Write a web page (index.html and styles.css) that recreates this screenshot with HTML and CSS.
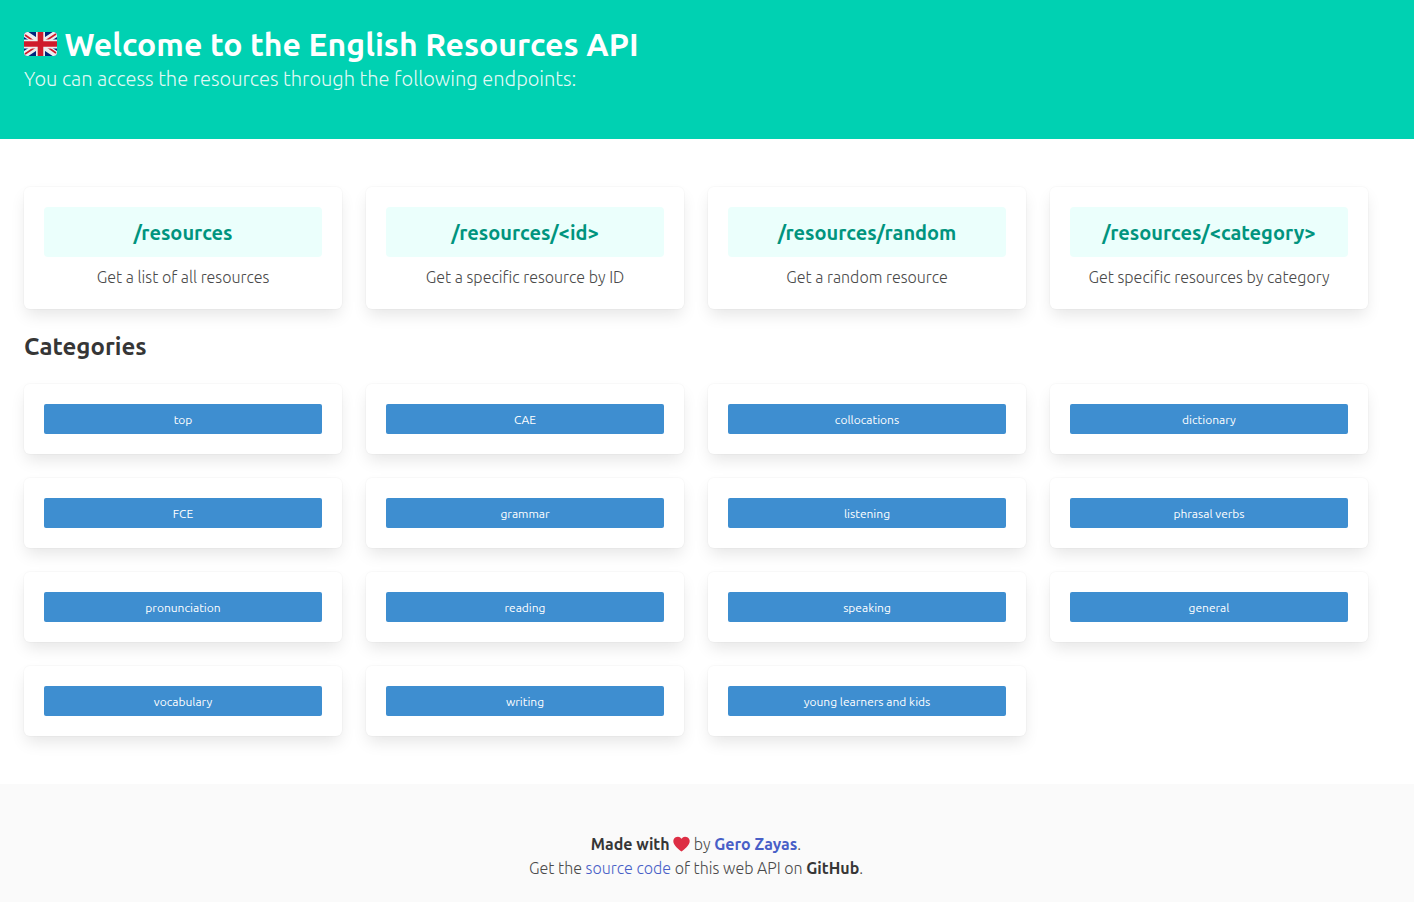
FILE: index.html
```html
<!DOCTYPE html>
<html lang="en">
<head>
<meta charset="utf-8">
<meta name="viewport" content="width=device-width, initial-scale=1">
<title>English Resources API</title>
<link rel="stylesheet" href="styles.css">
</head>
<body>
<header class="hero">
  <h1 class="title"><svg class="flag" viewBox="0 0 33 24" role="img" aria-label="United Kingdom"><defs><clipPath id="flag-shape"><rect width="33" height="24" rx="3.5"/></clipPath></defs><g clip-path="url(#flag-shape)"><rect width="33" height="24" fill="#00247d"/><path d="M0 1 33 23M33 1 0 23" stroke="#eee" stroke-width="6.500"/><path d="M1 3 11 10M32 21 22 14M32 2 20 10M1 22 13 14" stroke="#cf1b2b" stroke-width="1.700"/><path d="M16.500 0V24M0 12H33" stroke="#eee" stroke-width="9"/><path d="M16.500 0V24M0 12H33" stroke="#cf1b2b" stroke-width="5.600"/></g></svg> Welcome to the English Resources API</h1>
  <p class="subtitle">You can access the resources through the following endpoints:</p>
</header>
<main class="section">
  <div class="grid">
    <article class="box"><h2 class="endpoint">/resources</h2><p class="description">Get a list of all resources</p></article>
    <article class="box"><h2 class="endpoint">/resources/&lt;id&gt;</h2><p class="description">Get a specific resource by ID</p></article>
    <article class="box"><h2 class="endpoint">/resources/random</h2><p class="description">Get a random resource</p></article>
    <article class="box"><h2 class="endpoint">/resources/&lt;category&gt;</h2><p class="description">Get specific resources by category</p></article>
  </div>
  <h2 class="heading">Categories</h2>
  <div class="grid">
    <div class="box"><button class="button" type="button">top</button></div>
    <div class="box"><button class="button" type="button">CAE</button></div>
    <div class="box"><button class="button" type="button">collocations</button></div>
    <div class="box"><button class="button" type="button">dictionary</button></div>
    <div class="box"><button class="button" type="button">FCE</button></div>
    <div class="box"><button class="button" type="button">grammar</button></div>
    <div class="box"><button class="button" type="button">listening</button></div>
    <div class="box"><button class="button" type="button">phrasal verbs</button></div>
    <div class="box"><button class="button" type="button">pronunciation</button></div>
    <div class="box"><button class="button" type="button">reading</button></div>
    <div class="box"><button class="button" type="button">speaking</button></div>
    <div class="box"><button class="button" type="button">general</button></div>
    <div class="box"><button class="button" type="button">vocabulary</button></div>
    <div class="box"><button class="button" type="button">writing</button></div>
    <div class="box"><button class="button" type="button">young learners and kids</button></div>
  </div>
</main>
<footer class="footer">
  <p><strong>Made with</strong> <svg class="heart" viewBox="0 0 17 16" role="img" aria-label="love"><path d="M8.500 15.500C6 13.800.3 9.600.3 5.100A4.500 4.500 0 0 1 8.500 2.700 4.500 4.500 0 0 1 16.700 5.100C16.700 9.600 11 13.800 8.500 15.500Z" fill="#dd2e44"/></svg> by <a class="link" href="#"><strong>Gero Zayas</strong></a>.</p>
  <p>Get the <a class="link" href="#">source code</a> of this web API on <strong>GitHub</strong>.</p>
</footer>
</body>
</html>
```
FILE: styles.css
```css
*, *::before, *::after { box-sizing: border-box; }

body {
  display: flex;
  flex-direction: column;
  min-height: 100vh;
  margin: 0;
  background: #fff;
  color: #4a4a4a;
  font: 300 16px/24px Ubuntu, "Open Sans", "Noto Sans", sans-serif;
}

h1, h2, p { margin: 0; }
strong { color: #363636; font-weight: 600; }

.hero {
  padding: 24px 46px 48px 24px;
  background: #00d1b2;
  color: #fff;
}

.title { font-size: 32px; font-weight: 600; line-height: 40px; }
.flag { width: 33px; height: 24px; vertical-align: 0; }
.subtitle { margin-top: 2px; font-size: 20px; line-height: 25px; color: rgba(255, 255, 255, .9); }

.section { padding: 48px 46px 48px 24px; }

.grid {
  display: grid;
  grid-template-columns: repeat(4, minmax(0, 1fr));
  gap: 24px;
}

.box {
  padding: 20px;
  border-radius: 6px;
  background: #fff;
  box-shadow: 0 8px 16px -2px rgba(10, 10, 10, .1), 0 0 0 1px rgba(10, 10, 10, .02);
  text-align: center;
}

.endpoint {
  margin-bottom: 8px;
  padding: 12px 0 10px;
  border-radius: 4px;
  background: #ebfffc;
  color: #00947e;
  font-size: 20px;
  font-weight: 600;
  line-height: 28px;
}

.heading {
  margin: 24px 0;
  color: #363636;
  font-size: 24px;
  font-weight: 600;
  line-height: 27px;
}

.button {
  display: block;
  width: 100%;
  height: 30px;
  padding: 2px 0 0;
  border: 0;
  border-radius: 2px;
  background: #3e8ed0;
  color: #fff;
  font: 400 12px/18px Ubuntu, "Open Sans", "Noto Sans", sans-serif;
}

.footer {
  flex: 1;
  padding: 48px 46px 22px 24px;
  background: #fafafa;
  text-align: center;
}

.heart { width: 17px; height: 16px; vertical-align: -2px; }
.link { color: #485fc7; text-decoration: none; }
.link strong { color: inherit; }
```
